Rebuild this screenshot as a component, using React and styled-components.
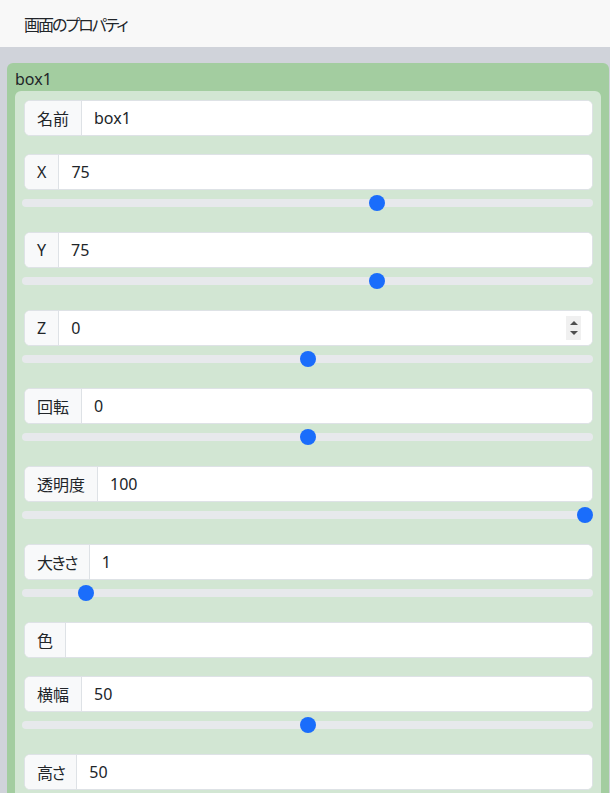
import React from 'react';
import styled, {createGlobalStyle} from 'styled-components';

const GlobalStyle = createGlobalStyle`
  html, body {
    margin: 0;
    padding: 0;
    background-color: #d0d3da;
  }
  body {
    font-family: "Noto Sans", "Noto Sans CJK JP", sans-serif;
    font-size: 16px;
    color: #212529;
    font-feature-settings: "palt";
  }
`;

const Header = styled.div`
  height: 47px;
  display: flex;
  align-items: center;
  padding: 0 24px;
  background-color: #f8f8f8;
  font-size: 16px;
  letter-spacing: -2px;
`;

const Body = styled.div`
  padding: 16px 1px 0 7px;
`;

const ObjectCard = styled.div`
  background-color: #a3cda0;
  border-radius: 6px;
  padding: 0 8px;
`;

const CardTitle = styled.div`
  height: 28px;
  line-height: 24px;
  padding-top: 4px;
  box-sizing: border-box;
`;

const Panel = styled.div`
  background-color: #d2e6d3;
  border-radius: 6px 6px 0 0;
  padding: 9px 8px 4px 7px;
`;

const Field = styled.div`
  margin-bottom: ${props => props.hasRange ? '17px' : '18px'};
`;

const InputGroup = styled.div`
  position: relative;
  display: flex;
  height: 36px;
  margin-left: 2px;
  border: 1px solid #dee2e6;
  border-radius: 6px;
  box-sizing: border-box;
  background-color: #fff;
  overflow: hidden;
`;

const Label = styled.span`
  display: flex;
  align-items: center;
  padding: 0 12px;
  background-color: #f8f9fa;
  border-right: 1px solid #dee2e6;
  white-space: nowrap;
  letter-spacing: ${props => props.narrow ? '-1.5px' : '0'};
`;

const ValueInput = styled.input`
  flex: 1;
  min-width: 0;
  border: none;
  outline: none;
  padding: 5px 12px;
  font: inherit;
  color: #212529;
  background: #fff;
  -moz-appearance: textfield;
  &::-webkit-inner-spin-button,
  &::-webkit-outer-spin-button {
    -webkit-appearance: none;
    margin: 0;
  }
`;

// spin buttons drawn over the number field, as the reference shows them on hover
const Spinner = styled.div`
  position: absolute;
  top: 5px;
  right: 11px;
  width: 15px;
  height: 24px;
  background-color: #f0f0f0;
  display: flex;
  flex-direction: column;
  align-items: center;
  justify-content: center;
  gap: 6px;
`;

const Arrow = styled.span`
  width: 0;
  height: 0;
  border-left: 4px solid transparent;
  border-right: 4px solid transparent;
  ${props => props.down
    ? 'border-top: 4px solid #505050;'
    : 'border-bottom: 4px solid #505050;'}
`;

const Range = styled.input`
  display: block;
  width: 100%;
  height: 24px;
  margin: 1px 0 0;
  padding: 0;
  background: transparent;
  appearance: none;
  -webkit-appearance: none;
  &::-webkit-slider-runnable-track {
    height: 8px;
    border-radius: 16px;
    background-color: #e7e9ec;
  }
  &::-webkit-slider-thumb {
    -webkit-appearance: none;
    width: 16px;
    height: 16px;
    margin-top: -4px;
    border: none;
    border-radius: 50%;
    background-color: #1a6dfb;
  }
`;

const fields = [
  {label: '名前', value: 'box1', type: 'text'},
  {label: 'X', value: 75, min: 0, max: 120},
  {label: 'Y', value: 75, min: 0, max: 120},
  {label: 'Z', value: 0, min: -100, max: 100, spin: true},
  {label: '回転', value: 0, min: -180, max: 180},
  {label: '透明度', value: 100, min: 0, max: 100},
  {label: '大きさ', value: 1, min: 0, max: 10, narrow: true},
  {label: '色', value: '', type: 'text'},
  {label: '横幅', value: 50, min: 0, max: 100},
  {label: '高さ', value: 50, min: 0, max: 100, narrow: true},
];

const App = () => {
  return (
    <>
      <GlobalStyle/>
      <Header>画面のプロパティ</Header>
      <Body>
        <ObjectCard>
          <CardTitle>box1</CardTitle>
          <Panel>
            {fields.map(f => (
              <Field key={f.label} hasRange={f.type !== 'text'}>
                <InputGroup>
                  <Label narrow={f.narrow}>{f.label}</Label>
                  <ValueInput
                    type={f.spin ? 'number' : 'text'}
                    defaultValue={f.value}
                  />
                  {f.spin &&
                    <Spinner>
                      <Arrow/>
                      <Arrow down/>
                    </Spinner>
                  }
                </InputGroup>
                {f.type !== 'text' &&
                  <Range type="range" min={f.min} max={f.max} defaultValue={f.value}/>
                }
              </Field>
            ))}
          </Panel>
        </ObjectCard>
      </Body>
    </>
  );
};

export default App;
